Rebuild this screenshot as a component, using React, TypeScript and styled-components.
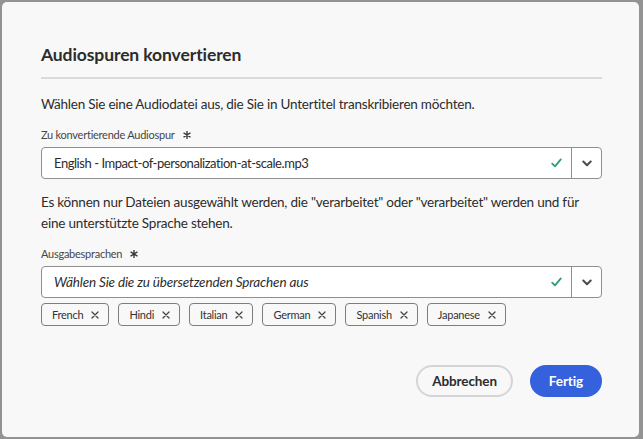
import React from "react";
import styled, { createGlobalStyle } from "styled-components";

const Global = createGlobalStyle`
  html, body { margin: 0; padding: 0; }
  body {
    background: #939393;
    font-family: Lato, "Noto Sans", "Liberation Sans", sans-serif;
    overflow: hidden;
  }
  * { box-sizing: border-box; }
`;

const Backdrop = styled.div`
  width: 643px;
  height: 439px;
  padding: 2px 4px 2px 2px;
`;

const Dialog = styled.section`
  width: 637px;
  height: 435px;
  background: #f8f8f8;
  border-radius: 5px;
  padding: 42px 37px 0 39px;
  display: flex;
  flex-direction: column;
  color: #222;
`;

const Title = styled.h2`
  margin: 0;
  font-size: 17.5px;
  letter-spacing: -0.1px;
  line-height: 22px;
  font-weight: 700;
  color: #2c2c2c;
`;

const Divider = styled.hr`
  margin: 11px 0 0;
  border: none;
  height: 2px;
  background: #dadada;
`;

const Para = styled.p<{ $top: number }>`
  margin: ${(p) => p.$top}px 0 0;
  font-size: 13.5px;
  letter-spacing: -0.22px;
  line-height: 21px;
  color: #2c2c2c;
`;

const Label = styled.div`
  margin-top: 12px;
  font-size: 11px;
  letter-spacing: -0.25px;
  line-height: 16px;
  color: #464646;
  display: flex;
  align-items: center;
  gap: 8px;
`;

const Field = styled.div`
  margin-top: 4px;
  height: 32px;
  display: flex;
  background: #fff;
  border: 1px solid #8f8f8f;
  border-radius: 4px;
`;

const FieldText = styled.div<{ $italic?: boolean }>`
  flex: 1;
  display: flex;
  align-items: center;
  padding-left: 12px;
  font-size: ${(p) => (p.$italic ? 13.5 : 13)}px;
  letter-spacing: ${(p) => (p.$italic ? -0.15 : -0.45)}px;
  font-style: ${(p) => (p.$italic ? "italic" : "normal")};
  color: #2c2c2c;
`;

const Check = styled.div`
  width: 30px;
  display: flex;
  align-items: center;
  justify-content: center;
`;

const ChevronBox = styled.div`
  width: 30px;
  border-left: 1px solid #8f8f8f;
  display: flex;
  align-items: center;
  justify-content: center;
`;

const Tags = styled.div`
  margin-top: 5px;
  display: flex;
  gap: 9px;
`;

const Tag = styled.div`
  height: 23px;
  display: flex;
  align-items: center;
  gap: 8px;
  padding: 0 9px 0 10px;
  border: 1px solid #7d7d7d;
  border-radius: 4px;
  font-size: 11px;
  letter-spacing: -0.25px;
  color: #333;
`;

const Footer = styled.div`
  margin-top: 39px;
  display: flex;
  justify-content: flex-end;
  gap: 17px;
`;

const Button = styled.button<{ $primary?: boolean }>`
  height: 32px;
  min-width: ${(p) => (p.$primary ? 72 : 96)}px;
  padding: 0 14px;
  border-radius: 16px;
  font-family: inherit;
  font-size: 13.5px;
  letter-spacing: -0.1px;
  font-weight: 700;
  border: 2px solid ${(p) => (p.$primary ? "#3562dc" : "#d5d5d5")};
  background: ${(p) => (p.$primary ? "#3562dc" : "transparent")};
  color: ${(p) => (p.$primary ? "#fff" : "#2c2c2c")};
`;

const Asterisk = () => (
  <svg width="8" height="8" viewBox="0 0 8 8">
    <path
      d="M4 0.5 V7.5 M1 2.2 L7 5.8 M7 2.2 L1 5.8"
      fill="none"
      stroke="#3a3a3a"
      strokeWidth="1.4"
      strokeLinecap="round"
    />
  </svg>
);

const CheckIcon = () => (
  <svg width="11" height="10" viewBox="0 0 11 10">
    <path d="M1.2 5.6 L4 8.4 L9.8 1.4" fill="none" stroke="#2d9d78" strokeWidth="1.8" strokeLinecap="round" strokeLinejoin="round" />
  </svg>
);

const ChevronIcon = () => (
  <svg width="10" height="7" viewBox="0 0 10 7">
    <path d="M1.3 1.5 L5 5.2 L8.7 1.5" fill="none" stroke="#4b4b4b" strokeWidth="2" strokeLinecap="round" strokeLinejoin="round" />
  </svg>
);

const XIcon = () => (
  <svg width="8" height="8" viewBox="0 0 8 8">
    <path d="M1 1 L7 7 M7 1 L1 7" fill="none" stroke="#444" strokeWidth="1.3" strokeLinecap="round" />
  </svg>
);

const languages = ["French", "Hindi", "Italian", "German", "Spanish", "Japanese"];

export default function App() {
  return (
    <>
      <Global />
      <Backdrop>
        <Dialog>
          <Title>Audiospuren konvertieren</Title>
          <Divider />
          <Para $top={15}>Wählen Sie eine Audiodatei aus, die Sie in Untertitel transkribieren möchten.</Para>
          <Label>
            Zu konvertierende Audiospur <Asterisk />
          </Label>
          <Field>
            <FieldText>English - Impact-of-personalization-at-scale.mp3</FieldText>
            <Check>
              <CheckIcon />
            </Check>
            <ChevronBox>
              <ChevronIcon />
            </ChevronBox>
          </Field>
          <Para $top={13}>
            Es können nur Dateien ausgewählt werden, die "verarbeitet" oder "verarbeitet" werden und für
            eine unterstützte Sprache stehen.
          </Para>
          <Label>
            Ausgabesprachen <Asterisk />
          </Label>
          <Field>
            <FieldText $italic>Wählen Sie die zu übersetzenden Sprachen aus</FieldText>
            <Check>
              <CheckIcon />
            </Check>
            <ChevronBox>
              <ChevronIcon />
            </ChevronBox>
          </Field>
          <Tags>
            {languages.map((l) => (
              <Tag key={l}>
                {l}
                <XIcon />
              </Tag>
            ))}
          </Tags>
          <Footer>
            <Button>Abbrechen</Button>
            <Button $primary>Fertig</Button>
          </Footer>
        </Dialog>
      </Backdrop>
    </>
  );
}
